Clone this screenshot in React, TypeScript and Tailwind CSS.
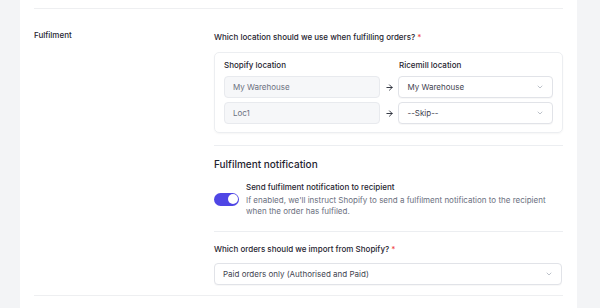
import { ArrowRight, ChevronDown } from "lucide-react";

const rows = [
  { shopify: "My Warehouse", ricemill: "My Warehouse" },
  { shopify: "Loc1", ricemill: "--Skip--" },
];

function Select({ value, className = "" }: { value: string; className?: string }) {
  return (
    <div
      className={`flex items-center justify-between h-[22px] px-[8px] bg-white border border-[#e1e3e8] rounded-[4px] shadow-[0_1px_1px_rgba(0,0,0,0.03)] text-[8px] text-[#3f4450] ${className}`}
    >
      <span>{value}</span>
      <ChevronDown className="w-[8px] h-[8px] text-[#9ca3af]" strokeWidth={2} />
    </div>
  );
}

export default function App() {
  return (
    <div
      className="w-[600px] h-[308px] bg-[#f3f4f6] overflow-hidden"
      style={{ fontFamily: "Inter, 'Noto Sans', sans-serif" }}
    >
      <div className="ml-[20px] w-[557px] h-full bg-white px-[14px] pt-[8px]">
        <div className="border-t border-[#eeeff1]" />

        <div className="flex pt-[20px]">
          {/* Section label */}
          <div className="w-[180px] shrink-0 text-[8px] leading-[12px] font-medium text-[#1f2430]">Fulfilment</div>

          <div className="w-[349px]">
            <div className="text-[8px] leading-[12px] font-medium text-[#1f2430] mt-[2px]">
              Which location should we use when fulfilling orders? <span className="text-[#ef4444]">*</span>
            </div>

            {/* Location mapping */}
            <div className="mt-[9px] border border-[#eceef1] rounded-[5px] shadow-[0_1px_2px_rgba(0,0,0,0.04)] px-[9px] pt-[6px] pb-[8px]">
              <div className="flex text-[8px] font-medium text-[#1f2430] h-[12px] items-center">
                <div className="w-[175px]">Shopify location</div>
                <div>Ricemill location</div>
              </div>
              <div className="mt-[5px] flex flex-col gap-[4px]">
                {rows.map((r) => (
                  <div key={r.shopify} className="flex items-center">
                    <div className="w-[156px] h-[22px] flex items-center px-[8px] bg-[#f6f7f9] border border-[#e8eaee] rounded-[4px] text-[8px] text-[#6b7080]">
                      {r.shopify}
                    </div>
                    <div className="w-[19px] flex justify-center">
                      <ArrowRight className="w-[9px] h-[9px] text-[#1f2430]" strokeWidth={2.4} />
                    </div>
                    <Select value={r.ricemill} className="w-[155px]" />
                  </div>
                ))}
              </div>
            </div>

            <div className="mt-[12px] border-t border-[#eceef1]" />

            {/* Notification */}
            <div className="mt-[11px] text-[10px] leading-[14px] font-medium text-[#1f2430]">Fulfilment notification</div>
            <div className="mt-[10px] flex items-center gap-[7px]">
              <div className="w-[25px] h-[13px] rounded-full bg-[#4f46e5] flex items-center justify-end px-[1.5px] shrink-0">
                <div className="w-[10px] h-[10px] rounded-full bg-white" />
              </div>
              <div>
                <div className="text-[8px] font-medium text-[#1f2430] leading-[12px]">
                  Send fulfilment notification to recipient
                </div>
                <div className="text-[8px] text-[#6b7080] leading-[11px] mt-[2px]">
                  If enabled, we'll instruct Shopify to send a fulfilment notification to the recipient
                  <br />
                  when the order has fulfiled.
                </div>
              </div>
            </div>

            <div className="mt-[14px] border-t border-[#eceef1]" />

            <div className="mt-[11px] text-[8px] leading-[12px] font-medium text-[#1f2430]">
              Which orders should we import from Shopify? <span className="text-[#ef4444]">*</span>
            </div>
            <Select value="Paid orders only (Authorised and Paid)" className="mt-[8px] w-[348px]" />
          </div>
        </div>

        <div className="mt-[10px] border-t border-[#eeeff1]" />
      </div>
    </div>
  );
}
